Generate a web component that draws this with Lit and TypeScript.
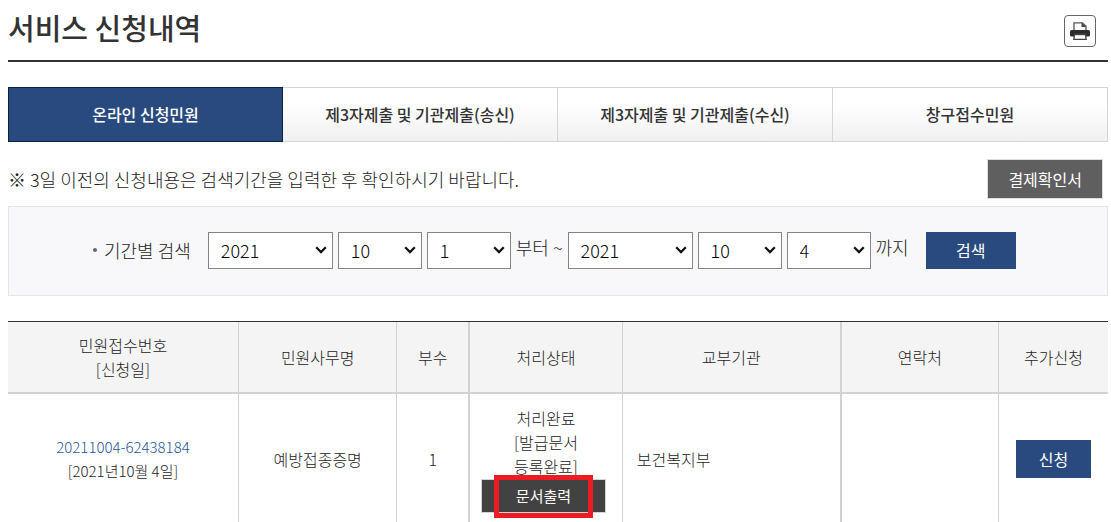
import { LitElement, html, css } from "lit";
import { customElement, state } from "lit/decorators.js";

const TABS = [
  "온라인 신청민원",
  "제3자제출 및 기관제출(송신)",
  "제3자제출 및 기관제출(수신)",
  "창구접수민원",
];

const range = (from: number, to: number) =>
  Array.from({ length: to - from + 1 }, (_, i) => from + i);

const YEARS = range(2015, 2021);
const MONTHS = range(1, 12);
const DAYS = range(1, 31);

@customElement("app-root")
export class AppRoot extends LitElement {
  static styles = css`
    :host {
      display: block;
      padding: 0 3px 0 8px;
      background: #fff;
      color: #222;
      font-family: "Noto Sans CJK KR", "Noto Sans", sans-serif;
      font-size: 16px;
      font-weight: 300;
      line-height: 24px;
    }
    * {
      box-sizing: border-box;
    }
    button,
    select {
      font: inherit;
      margin: 0;
      border-radius: 0;
      cursor: pointer;
    }
    .head {
      display: flex;
      justify-content: space-between;
      align-items: flex-start;
      height: 62px;
      padding-right: 12px;
      border-bottom: 2px solid #333;
    }
    .title {
      margin: 0;
      padding-top: 7px;
      color: #333;
      font-size: 29px;
      line-height: 40px;
      font-weight: 500;
    }
    .print {
      display: flex;
      align-items: center;
      justify-content: center;
      width: 32px;
      height: 32px;
      margin-top: 15px;
      padding: 0;
      border: 1px solid #666;
      border-radius: 4px;
      background: #fff;
    }
    .tabs {
      display: grid;
      grid-template-columns: repeat(4, 1fr);
      margin-top: 25px;
    }
    .tab {
      height: 55px;
      padding: 0 0 2px;
      border: 1px solid #d5d5d5;
      border-left-width: 0;
      background: linear-gradient(#fff 30%, #f0f0f0);
      color: #333;
      font-weight: 500;
    }
    .tab.on {
      border: 1px solid #0a2344;
      background: #294a7e;
      color: #fff;
    }
    .notice {
      display: flex;
      justify-content: space-between;
      align-items: center;
      margin-top: 17px;
      padding-right: 5px;
    }
    .notice p {
      margin: 0;
      font-size: 18px;
    }
    .receipt {
      height: 40px;
      padding: 0 20px;
      border: 1px solid #ddd;
      background: #5f5f5f;
      color: #fff;
      font-weight: 400;
    }
    .search {
      display: flex;
      align-items: center;
      gap: 5px;
      height: 90px;
      margin-top: 7px;
      padding: 0 0 2px 84px;
      border: 1px solid #e4e4ec;
      background: #f8f8fb;
      font-size: 18px;
    }
    .search h2 {
      display: flex;
      align-items: center;
      gap: 7px;
      margin: 0 12px 0 0;
      font-size: 18px;
      font-weight: inherit;
    }
    .dot {
      width: 4px;
      height: 4px;
      border-radius: 50%;
      background: #666;
    }
    .search select {
      appearance: none;
      width: 84px;
      height: 37px;
      padding: 0 0 0 12px;
      border: 1px solid #858585;
      background: #fff
        url("data:image/svg+xml,%3Csvg xmlns='http://www.w3.org/2000/svg' width='12' height='8'%3E%3Cpath d='M1.200 1.300 6 6.100 10.800 1.300' fill='none' stroke='%23111' stroke-width='2.200'/%3E%3C/svg%3E")
        no-repeat right 5px center;
      color: #000;
    }
    .search .year {
      width: 125px;
    }
    .word {
      padding-bottom: 6px;
    }
    .blue {
      border: 0;
      background: #294a7e;
      color: #fff;
      font-size: 16px;
      font-weight: 400;
    }
    .find {
      width: 90px;
      height: 37px;
      margin-left: 12px;
    }
    .list {
      width: 100%;
      margin-top: 25px;
      table-layout: fixed;
      border-collapse: separate;
      border-spacing: 0;
      border-top: 1px solid #333;
      text-align: center;
    }
    th,
    td {
      padding: 0;
      border-right: 1px solid #d2d2d2;
    }
    th {
      height: 72px;
      border-bottom: 2px solid #d2d2d2;
      background: #f4f4f4;
      font-weight: inherit;
    }
    td {
      height: 130px;
    }
    th:last-child,
    td:last-child {
      border-right: 0;
    }
    .thick {
      border-right-width: 2px;
    }
    .c1 { width: 21%; }
    .c2 { width: 14.4%; }
    .c3 { width: 6.6%; }
    .c4 { width: 13.9%; }
    .c5 { width: 19.9%; }
    .c6 { width: 14.3%; }
    .c7 { width: 9.9%; }
    .number {
      font-size: 15px;
    }
    .number a {
      color: #1f5596;
      text-decoration: none;
    }
    .agency {
      padding-left: 14px;
      text-align: left;
    }
    .output {
      position: relative;
      display: block;
      width: 125px;
      height: 34px;
      margin: 1px 0 0 11px;
      padding: 0;
      border: 1px solid #d5d5d5;
      background: #424242;
      color: #fff;
      font-size: 15px;
      font-weight: 400;
    }
    .mark {
      position: absolute;
      inset: -5px 12px -6px;
      border: 5px solid #ed1c24;
      pointer-events: none;
    }
    .apply {
      width: 75px;
      height: 38px;
    }
  `;

  @state() private active = 0;

  private picker(label: string, values: number[], value: number, cls = "") {
    return html`<select class=${cls} aria-label=${label}>
      ${values.map((v) => html`<option ?selected=${v === value}>${v}</option>`)}
    </select>`;
  }

  render() {
    return html`
      <header class="head">
        <h1 class="title">서비스 신청내역</h1>
        <button class="print" aria-label="인쇄">
          <svg width="22" height="20" viewBox="0 0 22 20" aria-hidden="true">
            <path d="M5 9V1.800h8.500L17 5.300V9" fill="#fff" stroke="#555" stroke-width="1.300" />
            <path d="M12.500 1.500v4.500h4.700z" fill="#444" />
            <path d="M2.500 9h17q1.500 0 1.500 1.500v3.500q0 1.500-1.500 1.500h-17Q1 15.500 1 14v-3.500q0-1.500 1.500-1.500z" fill="#2c2c2c" />
            <path d="M5.600 13.500h10.800l.8 4.800H4.800z" fill="#fff" stroke="#444" stroke-width="1.300" />
          </svg>
        </button>
      </header>

      <nav class="tabs">
        ${TABS.map(
          (t, i) => html`<button
            class="tab ${i === this.active ? "on" : ""}"
            @click=${() => (this.active = i)}
          >${t}</button>`
        )}
      </nav>

      <div class="notice">
        <p>※ 3일 이전의 신청내용은 검색기간을 입력한 후 확인하시기 바랍니다.</p>
        <button class="receipt">결제확인서</button>
      </div>

      <section class="search">
        <h2><span class="dot"></span>기간별 검색</h2>
        ${this.picker("시작 연도", YEARS, 2021, "year")}
        ${this.picker("시작 월", MONTHS, 10)}
        ${this.picker("시작 일", DAYS, 1)}
        <span class="word">부터 ~</span>
        ${this.picker("종료 연도", YEARS, 2021, "year")}
        ${this.picker("종료 월", MONTHS, 10)}
        ${this.picker("종료 일", DAYS, 4)}
        <span class="word">까지</span>
        <button class="blue find">검색</button>
      </section>

      <table class="list">
        <thead>
          <tr>
            <th class="c1">민원접수번호<br />[신청일]</th>
            <th class="c2">민원사무명</th>
            <th class="c3 thick">부수</th>
            <th class="c4">처리상태</th>
            <th class="c5 thick">교부기관</th>
            <th class="c6">연락처</th>
            <th class="c7">추가신청</th>
          </tr>
        </thead>
        <tbody>
          <tr>
            <td class="number"><a href="#">20211004-62438184</a><br />[2021년10월 4일]</td>
            <td>예방접종증명</td>
            <td class="thick">1</td>
            <td>
              처리완료<br />[발급문서<br />등록완료]
              <button class="output">문서출력<span class="mark"></span></button>
            </td>
            <td class="agency thick">보건복지부</td>
            <td></td>
            <td><button class="blue apply">신청</button></td>
          </tr>
        </tbody>
      </table>
    `;
  }
}
